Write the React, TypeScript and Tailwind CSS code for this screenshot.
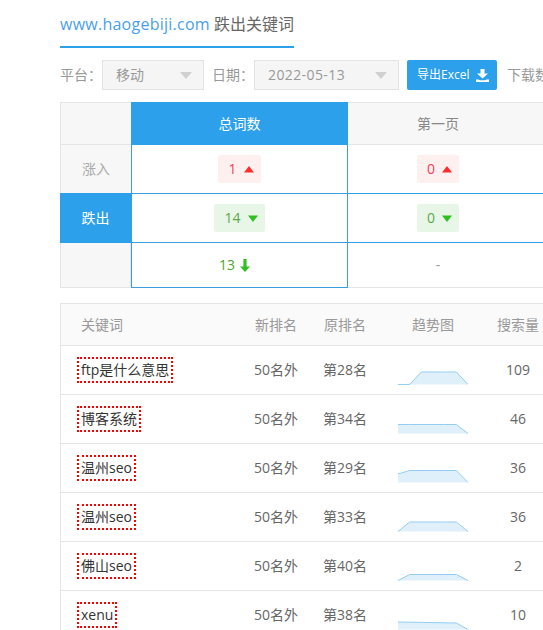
import React from 'react';

const Triangle: React.FC<{ up?: boolean }> = ({ up }) => (
  <svg width="10" height="7" viewBox="0 0 10 7" className={up ? 'text-[#ff2d2d]' : 'text-[#2fbf1f]'}>
    <path d={up ? 'M5 0L10 6.500H0Z' : 'M0 0.500H10L5 7Z'} fill="currentColor" />
  </svg>
);

const Badge: React.FC<{ value: number; up?: boolean }> = ({ value, up }) => (
  <div
    className={`flex h-[28px] items-center gap-[7px] rounded-[2px] pl-[10px] pr-[7px] ${
      up ? 'bg-[#fff0f0] text-[#f0405c]' : 'bg-[#e8f6e8] text-[#5aa84c]'
    }`}
  >
    <span>{value}</span>
    <Triangle up={up} />
  </div>
);

const Select: React.FC<{ label: string; width: string; wide?: boolean }> = ({ label, width, wide }) => (
  <div className={`flex h-[30px] items-center justify-between border border-[#e3e3e3] bg-[#f5f5f5] pl-[13px] pr-[11px] text-[#999] ${width}`}>
    <span className={wide ? 'tracking-[0.4px]' : ''}>{label}</span>
    <svg width="12" height="7" viewBox="0 0 12 7">
      <path d="M0 0H12L6 7Z" fill="#d0d0d0" />
    </svg>
  </div>
);

type Row = { keyword: string; old: string; count: number; points: number[] };

const rows: Row[] = [
  { keyword: 'ftp是什么意思', old: '第28名', count: 109, points: [38.5, 38.5, 26, 26, 26, 26, 38.5] },
  { keyword: '博客系统', old: '第34名', count: 46, points: [29.5, 29.5, 29.5, 29.5, 29.5, 29.5, 38.5] },
  { keyword: '温州seo', old: '第29名', count: 36, points: [30, 26.500, 26.500, 26.500, 26.500, 26.500, 38.500] },
  { keyword: '温州seo', old: '第33名', count: 36, points: [38.5, 29, 29, 29, 29, 29, 38.5] },
  { keyword: '佛山seo', old: '第40名', count: 2, points: [38.5, 32.5, 32.5, 32.5, 32.5, 32.5, 38.5] },
  { keyword: 'xenu', old: '第38名', count: 10, points: [31, 31.200, 31.400, 31.600, 31.800, 32, 38.500] },
];

const Trend: React.FC<{ points: number[] }> = ({ points }) => {
  const coords = points.map((y, i) => `${((i * 70) / 6).toFixed(2)},${y}`);
  const base = Math.max(...points);
  return (
    <svg width="70" height="48" viewBox="0 0 70 48">
      <polygon points={`0,${base} ${coords.join(' ')} 70,${base}`} fill="#e0f0fb" />
      <polyline points={coords.join(' ')} fill="none" stroke="#93cdf2" strokeWidth="1" />
    </svg>
  );
};

const App: React.FC = () => {
  return (
    <div className="h-[630px] w-[543px] overflow-hidden bg-white pl-[60px] text-[14px] font-['Open_Sans','Noto_Sans_CJK_SC',sans-serif] leading-[20px]">
      <div className="w-[800px]">
        {/* title */}
        <div className="w-[234px] border-b-2 border-[#2ca0ea] pb-[10px] pt-[12px] text-[16px] leading-[24px] text-[#666] whitespace-nowrap">
          <span className="text-[#4a9fea] tracking-[0.25px]">www.haogebiji.com</span> 跌出关键词
        </div>

        {/* filters */}
        <div className="mt-[12px] flex items-center text-[#999]">
          <span className="w-[42px]">平台：</span>
          <Select label="移动" width="w-[102px]" />
          <span className="ml-[8px] w-[42px]">日期：</span>
          <Select label="2022-05-13" width="w-[145px]" wide />
          <button className="ml-[8px] flex h-[30px] w-[90px] items-center justify-between rounded-[2px] bg-[#2ca0ea] pl-[10px] pr-[8px] text-[12px] text-white">
            <span>导出Excel</span>
            <svg width="13" height="13" viewBox="0 0 13 13">
              <path d="M4.500 0H8.500V4.500H12L6.500 9.500L1 4.500H4.500Z M0 10.500H2.500L4 11.200H9L10.500 10.500H13V13H0Z" fill="#fff" />
            </svg>
          </button>
          <span className="ml-[10px] whitespace-nowrap">下载数据</span>
        </div>

        {/* summary table */}
        <div className="mt-[12px] grid grid-cols-[71px_217px_180px_200px] grid-rows-[43px_48px_50px_45px] text-center">
          <div className="border-l border-t border-b border-[#e5e5e5] bg-[#f7f7f7]" />
          <div className="flex items-center justify-center bg-[#2ca0ea] text-white">总词数</div>
          <div className="flex items-center justify-center border-y border-[#e5e5e5] bg-[#f7f7f7] text-[#888]">第一页</div>
          <div className="border-y border-[#e5e5e5] bg-[#f7f7f7]" />

          <div className="flex items-center justify-center border-l border-[#e5e5e5] bg-[#f7f7f7] text-[#aaa]">涨入</div>
          <div className="flex items-center justify-center border-x border-[#3a9ddf]">
            <Badge value={1} up />
          </div>
          <div className="flex items-center justify-center">
            <Badge value={0} up />
          </div>
          <div />

          <div className="flex items-center justify-center bg-[#2ca0ea] text-white">跌出</div>
          <div className="flex items-center justify-center border border-[#3a9ddf]">
            <Badge value={14} />
          </div>
          <div className="flex items-center justify-center border-y border-[#2ca0ea]">
            <Badge value={0} />
          </div>
          <div className="border-y border-[#2ca0ea]" />

          <div className="border-x border-b border-[#e5e5e5] bg-[#f7f7f7]" />
          <div className="flex items-center justify-center gap-[5px] border-x border-b border-[#3a9ddf] text-[#4fa52a]">
            <span>13</span>
            <svg width="10" height="13" viewBox="0 0 10 13" className="mr-[10px]">
              <path d="M3.400 0H6.600V7.500H10L5 13L0 7.500H3.400Z" fill="#2fbf1f" />
            </svg>
          </div>
          <div className="flex items-center justify-center border-b border-[#e5e5e5] text-[#999]">-</div>
          <div className="border-b border-[#e5e5e5]" />
        </div>

        {/* keyword table */}
        <div className="mt-[15px] border-l border-t border-[#e5e5e5]">
          <div className="grid h-[42px] grid-cols-[193px_69px_75px_70px_100px] items-center border-b border-[#e5e5e5] bg-[#fafafa] text-[#999]">
            <span className="pl-[20px]">关键词</span>
            <span className="pl-px">新排名</span>
            <span className="pl-px">原排名</span>
            <span className="text-center whitespace-nowrap">趋势图</span>
            <span className="text-center">搜索量</span>
          </div>
          {rows.map((row, i) => (
            <div key={i} className="grid h-[49px] grid-cols-[193px_69px_75px_70px_100px] items-center border-b border-[#e5e5e5] text-[#666]">
              <div className="pl-[16px]">
                <span className="inline-flex h-[26px] items-center border-2 border-dotted border-[#f00] px-[2px] text-[#333]">
                  {row.keyword}
                </span>
              </div>
              <span>50名外</span>
              <span>{row.old}</span>
              <Trend points={row.points} />
              <span className="text-center">{row.count}</span>
            </div>
          ))}
        </div>
      </div>
    </div>
  );
};

export default App;
